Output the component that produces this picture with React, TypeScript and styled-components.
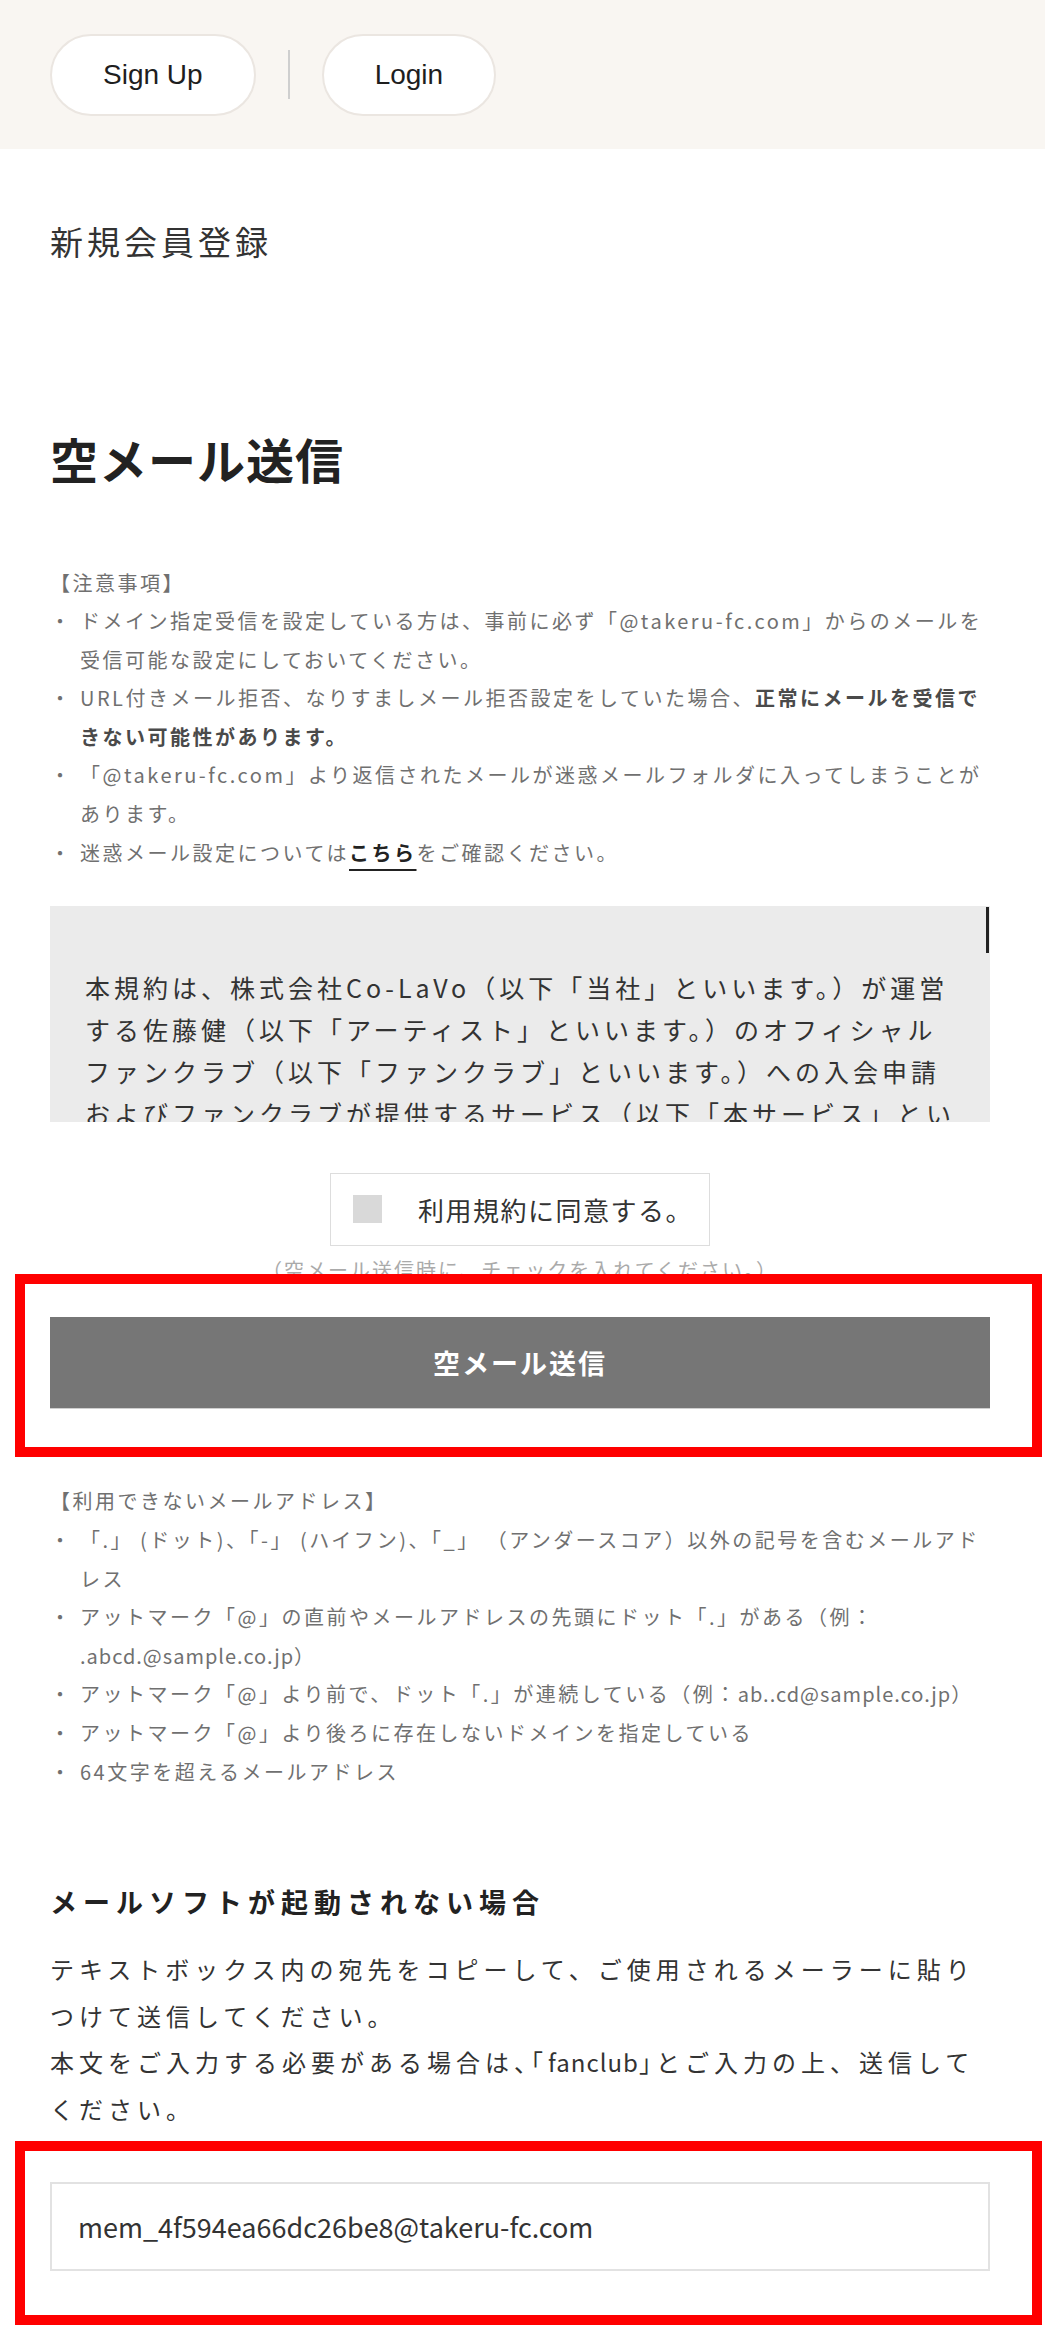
import React from "react";
import styled, { createGlobalStyle } from "styled-components";

const GlobalStyle = createGlobalStyle`
  html, body {
    margin: 0;
    padding: 0;
    background: #fff;
  }
  body {
    font-family: "Noto Sans CJK JP", "Noto Sans", sans-serif;
    color: #333;
  }
  * {
    box-sizing: border-box;
  }
`;

const Header = styled.header`
  height: 149px;
  background: #f9f6f2;
  display: flex;
  align-items: center;
  gap: 32px;
  padding: 0 50px;
`;

const PillButton = styled.button`
  height: 82px;
  padding: 0 51px;
  border-radius: 41px;
  border: 2px solid #ebe6e1;
  background: #fff;
  font-family: "Liberation Sans", Arial, sans-serif;
  font-size: 28px;
  color: #1e1e1e;
`;

const Divider = styled.span`
  width: 2px;
  height: 49px;
  background: #cfcfcf;
`;

const Main = styled.main`
  padding: 0 55px 0 50px;
`;

const PageTitle = styled.div`
  margin-top: 68px;
  font-size: 33px;
  letter-spacing: 4px;
  line-height: 49.5px;
  color: #333;
`;

const Heading = styled.h1`
  margin: 158px 0 0;
  font-size: 48px;
  font-weight: 700;
  letter-spacing: 1px;
  line-height: 67px;
  color: #222;
`;

const NoteBlock = styled.div<{ $top: number }>`
  margin-top: ${(p) => p.$top}px;
  font-size: 20px;
  letter-spacing: 2.5px;
  line-height: 38.6px;
  color: #707070;
`;

const NoteItem = styled.div`
  display: flex;
`;

const Bullet = styled.span`
  flex: none;
  width: 30px;
  letter-spacing: 0;
`;

const NoteText = styled.span`
  flex: 1;
`;

const Latin = styled.span`
  letter-spacing: 1px;
`;

const Half = styled.span`
  font-feature-settings: "halt";
`;

const Strong = styled.b`
  color: #4a4a4a;
  font-weight: 700;
`;

const TextLink = styled.a`
  color: #222;
  font-weight: 700;
  text-decoration: underline;
  text-decoration-thickness: 2px;
  text-underline-offset: 8px;
`;

const TermsBox = styled.div`
  position: relative;
  margin-top: 33.5px;
  height: 216px;
  background: #ebebeb;
`;

const TermsScroll = styled.div`
  height: 100%;
  overflow: hidden;
  padding: 60px 25px 0 35px;
  font-size: 25px;
  letter-spacing: 4px;
  line-height: 42px;
  color: #333;
`;

const ScrollThumb = styled.span`
  position: absolute;
  top: 1px;
  right: 1px;
  width: 3px;
  height: 46px;
  background: #222;
`;

const AgreeRow = styled.div`
  margin-top: 51px;
  display: flex;
  justify-content: center;
`;

const AgreeLabel = styled.label`
  display: inline-flex;
  align-items: center;
  gap: 36px;
  height: 73px;
  padding: 0 16px 0 22px;
  border: 1px solid #dddddd;
  background: #fff;
`;

const CheckSquare = styled.span`
  width: 29px;
  height: 28px;
  background: #d9d9d9;
`;

const AgreeText = styled.span`
  font-size: 26px;
  letter-spacing: 1.5px;
  color: #333;
`;

const Caption = styled.div`
  margin-top: 9px;
  text-align: center;
  font-size: 20px;
  letter-spacing: 2px;
  line-height: 30px;
  color: #aaa;
`;

const RedFrame = styled.div<{ $top: number; $pt: number; $pb: number }>`
  position: relative;
  z-index: 1;
  border: 10px solid #ff0000;
  margin: ${(p) => p.$top}px -52px 0 -35px;
  padding: ${(p) => p.$pt}px 42px ${(p) => p.$pb}px 25px;
`;

const SendButton = styled.button`
  display: block;
  width: 100%;
  height: 92px;
  border: none;
  border-bottom: 1px solid #cfcfcf;
  background: #767676;
  color: #fff;
  font-family: inherit;
  font-size: 27px;
  font-weight: 700;
  letter-spacing: 2px;
`;

const SubHeading = styled.h2`
  margin: 90.5px 0 0;
  font-size: 27px;
  font-weight: 700;
  letter-spacing: 6px;
  line-height: 40px;
  color: #222;
`;

const BodyText = styled.p`
  margin: 24.75px 0 0;
  font-size: 24px;
  letter-spacing: 5px;
  line-height: 46.5px;
  color: #333;
`;

const AddressInput = styled.input`
  display: block;
  width: 100%;
  height: 89px;
  padding: 0 26px;
  border: 2px solid #e2e2e2;
  font-family: "Noto Sans CJK JP", "Noto Sans", sans-serif;
  font-size: 27px;
  color: #333;
  outline: none;
`;

const notes = [
  <>ドメイン指定受信を設定している方は、事前に必ず「@takeru-fc.com」からのメールを受信可能な設定にしておいてください。</>,
  <>
    URL付きメール拒否、なりすましメール拒否設定をしていた場合、
    <Strong>正常にメールを受信できない可能性があります。</Strong>
  </>,
  <>「@takeru-fc.com」より返信されたメールが迷惑メールフォルダに入ってしまうことがあります。</>,
  <>
    迷惑メール設定については<TextLink href="#">こちら</TextLink>をご確認ください。
  </>,
];

const ngList = [
  <>
    「.」 (ドット)、「-」 (ハイフン)、「_」 （アンダースコア）以外の記号を含むメールアド
    <br />
    レス
  </>,
  <>
    アットマーク「@」の直前やメールアドレスの先頭にドット「.」がある（例：
    <br />
    <Latin>.abcd.@sample.co.jp</Latin>）
  </>,
  <>
    アットマーク「@」より前で、ドット「.」が連続している（例：
    <Latin>ab..cd@sample.co.jp</Latin>）
  </>,
  <>アットマーク「@」より後ろに存在しないドメインを指定している</>,
  <>64文字を超えるメールアドレス</>,
];

export default function App() {
  return (
    <>
      <GlobalStyle />
      <Header>
        <PillButton>Sign Up</PillButton>
        <Divider />
        <PillButton>Login</PillButton>
      </Header>
      <Main>
        <PageTitle>新規会員登録</PageTitle>
        <Heading>空メール送信</Heading>

        <NoteBlock $top={72}>
          <div>【注意事項】</div>
          {notes.map((n, i) => (
            <NoteItem key={i}>
              <Bullet>・</Bullet>
              <NoteText>{n}</NoteText>
            </NoteItem>
          ))}
        </NoteBlock>

        <TermsBox>
          <TermsScroll>
            本規約は、株式会社Co-LaVo（以下「当社」といいます。）が運営する佐藤健（以下「アーティスト」といいます。）のオフィシャルファンクラブ（以下「ファンクラブ」といいます。）への入会申請およびファンクラブが提供するサービス（以下「本サービス」といいます。）の利用に関する条件を定めるものです。
          </TermsScroll>
          <ScrollThumb />
        </TermsBox>

        <AgreeRow>
          <AgreeLabel>
            <CheckSquare />
            <AgreeText>利用規約に同意する。</AgreeText>
          </AgreeLabel>
        </AgreeRow>
        <Caption>（空メール送信時に、チェックを入れてください。）</Caption>

        <RedFrame $top={-11} $pt={33} $pb={38}>
          <SendButton>空メール送信</SendButton>
        </RedFrame>

        <NoteBlock $top={25.7}>
          <div>【利用できないメールアドレス】</div>
          {ngList.map((t, i) => (
            <NoteItem key={i}>
              <Bullet>・</Bullet>
              <NoteText>{t}</NoteText>
            </NoteItem>
          ))}
        </NoteBlock>

        <SubHeading>メールソフトが起動されない場合</SubHeading>
        <BodyText>
          テキストボックス内の宛先をコピーして、ご使用されるメーラーに貼り
          <br />
          つけて送信してください。
          <br />
          本文をご入力する必要がある場合は<Half>、「</Half>
          <Latin>fanclub</Latin>
          <Half>」</Half>とご入力の上、送信して
          <br />
          ください。
        </BodyText>

        <RedFrame $top={8.25} $pt={31} $pb={44}>
          <AddressInput readOnly value="mem_4f594ea66dc26be8@takeru-fc.com" />
        </RedFrame>
      </Main>
    </>
  );
}
